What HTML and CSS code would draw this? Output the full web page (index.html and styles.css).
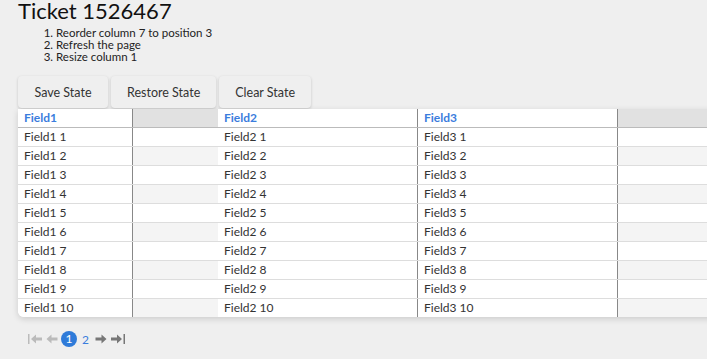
FILE: index.html
```html
<!DOCTYPE html>
<html lang="en">
<head>
    <meta charset="UTF-8">
    <title>Ticket 1526467</title>
    <link rel="stylesheet" href="styles.css">
</head>
<body>

    <h1 class="title">Ticket 1526467</h1>
    <ol class="steps">
        <li>Reorder column 7 to position 3</li>
        <li>Refresh the page</li>
        <li>Resize column 1</li>
    </ol>

    <div class="toolbar">
        <button class="btn">Save State</button>
        <button class="btn">Restore State</button>
        <button class="btn">Clear State</button>
    </div>

    <!-- Grid -->
    <div class="grid">
        <div class="row head">
            <div class="cell line">Field1</div>
            <div class="fill"></div>
            <div class="cell line">Field2</div>
            <div class="cell line">Field3</div>
            <div class="fill"></div>
        </div>
        <div id="rows"></div>
    </div>

    <!-- Pager -->
    <div class="pager">
        <svg class="pg-icon off" width="15" height="12" viewBox="0 0 15 12"><rect x="0" y="1" width="1.5" height="10"/><path d="M3 6 L8 1.5 L8 4.5 L14 4.5 L14 7.5 L8 7.5 L8 10.5 Z"/></svg>
        <svg class="pg-icon off" width="12" height="12" viewBox="0 0 12 12"><path d="M0.5 6 L5.5 1.5 L5.5 4.5 L11.5 4.5 L11.5 7.5 L5.5 7.5 L5.5 10.5 Z"/></svg>
        <span class="page current">1</span>
        <span class="page">2</span>
        <svg class="pg-icon" width="12" height="12" viewBox="0 0 12 12"><path d="M11.5 6 L6.5 1.5 L6.5 4.5 L0.5 4.5 L0.5 7.5 L6.5 7.5 L6.5 10.5 Z"/></svg>
        <svg class="pg-icon" width="15" height="12" viewBox="0 0 15 12"><path d="M12 6 L7 1.5 L7 4.5 L1 4.5 L1 7.5 L7 7.5 L7 10.5 Z"/><rect x="13.5" y="1" width="1.5" height="10"/></svg>
    </div>

    <script>
        let rows = document.getElementById("rows");
        for (let i = 1; i <= 10; i++) {
            let row = document.createElement("div");
            row.className = "row" + (i % 2 === 0 ? " even" : "");
            row.innerHTML =
                '<div class="cell line">Field1 ' + i + '</div>' +
                '<div class="fill"></div>' +
                '<div class="cell line">Field2 ' + i + '</div>' +
                '<div class="cell line">Field3 ' + i + '</div>' +
                '<div class="fill"></div>';
            rows.appendChild(row);
        }
    </script>

</body>
</html>
```

FILE: styles.css
```css
* {
    margin: 0;
    padding: 0;
    box-sizing: border-box;
}
body {
    background: #efefef;
    font-family: 'Lato', 'Open Sans', sans-serif;
    color: #333;
    padding-left: 18px;
    overflow: hidden;
}

.title {
    font-size: 22px;
    font-weight: 400;
    color: #111;
    line-height: 22px;
}
.steps {
    margin: 5px 0 0 38px;
    font-size: 11.5px;
    line-height: 12px;
    color: #222;
}

.toolbar {
    display: flex;
    gap: 3px;
    margin-top: 13px;
}
.btn {
    background: #efefef;
    border: none;
    border-radius: 4px;
    height: 32px;
    padding: 0 16px;
    font-family: inherit;
    font-size: 12.5px;
    color: #333;
    box-shadow: 0 1px 3px rgba(0, 0, 0, 0.18);
    cursor: pointer;
}
.btn:first-child {
    padding: 0 16.5px;
}

.grid {
    margin-top: 1px;
    background: #fff;
    border-bottom-left-radius: 6px;
    box-shadow: 0 2px 6px rgba(0, 0, 0, 0.15);
    margin-right: -20px;
    overflow: hidden;
}
.row {
    display: grid;
    grid-template-columns: 115px 85px 200px 200px 1fr;
    height: 19px;
    border-bottom: 1px solid #ddd;
    font-size: 12px;
    line-height: 18px;
}
.row.even .fill {
    background: #f4f4f4;
}
.row:last-child {
    border-bottom: none;
    height: 18px;
}
.head {
    border-bottom: 1px solid #bbb;
}
.head .cell {
    color: #3b7ddd;
    font-weight: bold;
}
.head .fill {
    background: #e1e1e1;
}
.cell {
    background: #fff;
    padding-left: 6px;
    white-space: nowrap;
}
.cell.line {
    border-right: 1px solid #888;
}
.row .cell:nth-child(3) {
    border-right: none;
}
.row .cell:nth-child(4) {
    border-left: 1px solid #888;
    margin-left: -1px;
}

.pager {
    display: flex;
    align-items: center;
    margin: 13px 0 0 10px;
    height: 18px;
}
.pg-icon {
    fill: #777;
    margin-right: 3px;
}
.pg-icon.off {
    fill: #bbb;
}
.page {
    font-size: 12px;
    color: #3b7ddd;
    margin: 0 6px 0 1px;
}
.page.current {
    width: 16px;
    height: 16px;
    border-radius: 50%;
    background: #2f7bd9;
    color: #fff;
    text-align: center;
    line-height: 16px;
    margin: 0 4px 0 0;
}
```
